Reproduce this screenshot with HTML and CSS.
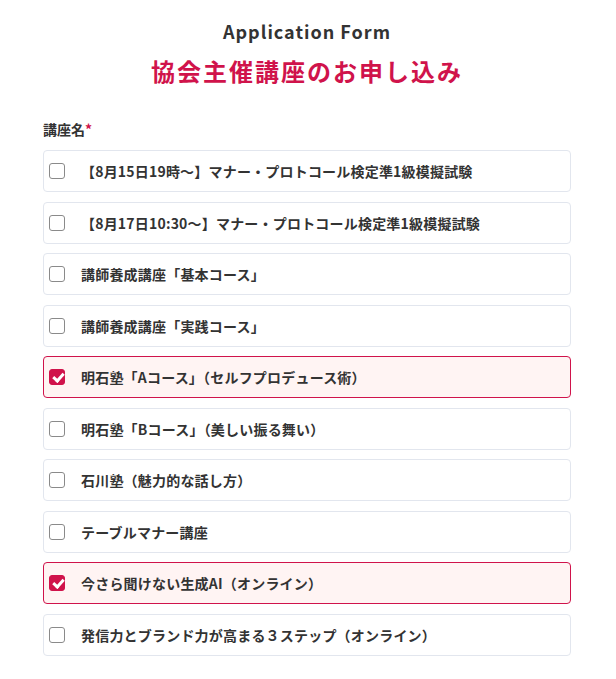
FILE: index.html
```html
<!DOCTYPE html>
<html lang="ja">
<head>
  <meta charset="UTF-8">
  <meta name="viewport" content="width=device-width, initial-scale=1.0">
  <title>協会主催講座のお申し込み</title>
  <link rel="stylesheet" href="styles.css">
</head>
<body>
  <div class="container">
    <p class="sub-title">Application Form</p>
    <h1>協会主催講座のお申し込み</h1>

    <div class="field">
      <div class="field-label">講座名<span class="required">*</span></div>

      <label class="course">
        <input type="checkbox">
        <span class="course-name">【8月15日19時～】マナー・プロトコール検定準1級模擬試験</span>
      </label>
      <label class="course">
        <input type="checkbox">
        <span class="course-name">【8月17日10:30～】マナー・プロトコール検定準1級模擬試験</span>
      </label>
      <label class="course">
        <input type="checkbox">
        <span class="course-name">講師養成講座「基本コース」</span>
      </label>
      <label class="course">
        <input type="checkbox">
        <span class="course-name">講師養成講座「実践コース」</span>
      </label>
      <label class="course checked">
        <input type="checkbox" checked>
        <span class="course-name">明石塾「Aコース」（セルフプロデュース術）</span>
      </label>
      <label class="course">
        <input type="checkbox">
        <span class="course-name">明石塾「Bコース」（美しい振る舞い）</span>
      </label>
      <label class="course">
        <input type="checkbox">
        <span class="course-name">石川塾（魅力的な話し方）</span>
      </label>
      <label class="course">
        <input type="checkbox">
        <span class="course-name">テーブルマナー講座</span>
      </label>
      <label class="course checked">
        <input type="checkbox" checked>
        <span class="course-name">今さら聞けない生成AI（オンライン）</span>
      </label>
      <label class="course">
        <input type="checkbox">
        <span class="course-name">発信力とブランド力が高まる３ステップ（オンライン）</span>
      </label>
    </div>
  </div>
</body>
</html>
```

FILE: styles.css
```css
body {
  font-family: "Noto Sans CJK JP", "Noto Sans", sans-serif;
  margin: 0;
  padding: 0;
  background-color: #fff;
  color: #333;
}

.container {
  padding: 19px 45px 0 43px;
}

.sub-title {
  margin: 0;
  text-align: center;
  font-size: 18px;
  font-weight: bold;
  letter-spacing: 1px;
  line-height: 24px;
  color: #333;
}

h1 {
  margin: 12px 0 0;
  text-align: center;
  font-size: 24px;
  line-height: 32px;
  letter-spacing: 2px;
  color: #d0134b;
}

.field {
  margin-top: 32px;
}

.field-label {
  font-size: 14px;
  font-weight: bold;
  line-height: 20px;
  margin-bottom: 11px;
}

.required {
  color: #d0134b;
}

.course {
  display: flex;
  align-items: center;
  height: 42px;
  margin-bottom: 9.56px;
  padding: 0 12px 0 5px;
  border: 1px solid #e2e6ee;
  border-radius: 4px;
  box-sizing: border-box;
  cursor: pointer;
}

.course.checked {
  border-color: #d0134b;
  background-color: #fff4f3;
}

.course input {
  appearance: none;
  width: 16px;
  height: 16px;
  margin: 0 16px 0 0;
  border: 1px solid #8a8a8a;
  border-radius: 3px;
  background: #fff;
  flex-shrink: 0;
  position: relative;
}

.course input:checked {
  border-color: #d0134b;
  background-color: #d0134b;
}

.course input:checked::after {
  content: "";
  position: absolute;
  left: 4.5px;
  top: 1px;
  width: 4px;
  height: 8px;
  border: solid #fff;
  border-width: 0 3px 3px 0;
  transform: rotate(42deg);
}

.course-name {
  font-size: 14px;
  font-weight: bold;
  letter-spacing: 0.2px;
  color: #333;
}
```
